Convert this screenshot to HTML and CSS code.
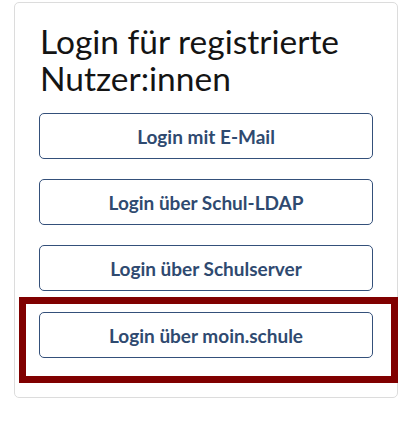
FILE: index.html
```html
<!DOCTYPE html>
<html lang="de">
<head>
<meta charset="utf-8">
<title>Login</title>
<link rel="stylesheet" href="styles.css">
</head>
<body>
<div class="card">
  <h2 class="title">Login für registrierte Nutzer:innen</h2>
  <div class="buttons">
    <a class="btn" href="#">Login mit E-Mail</a>
    <a class="btn" href="#">Login über Schul-LDAP</a>
    <a class="btn" href="#">Login über Schulserver</a>
    <div class="highlight">
      <a class="btn" href="#">Login über moin.schule</a>
    </div>
  </div>
</div>
</body>
</html>
```
FILE: styles.css
```css
html, body {
  margin: 0;
  padding: 0;
  background: #fff;
}
body {
  font-family: Lato, "Open Sans", sans-serif;
}
.card {
  margin: 2px 0 0 14px;
  width: 384px;
  height: 396px;
  box-sizing: border-box;
  border: 1px solid #dcdcdc;
  border-radius: 5px;
  padding: 0 24px 13px 24px;
}
.title {
  margin: 20px 0 0 1px;
  font-size: 33.5px;
  line-height: 37px;
  font-weight: 400;
  color: #141414;
}
.buttons {
  display: flex;
  flex-direction: column;
  margin-top: 16px;
}
.btn {
  display: flex;
  align-items: center;
  justify-content: center;
  height: 46px;
  box-sizing: border-box;
  border: 1px solid #34507a;
  border-radius: 5px;
  color: #2f4a70;
  font-weight: 700;
  font-size: 19px;
  text-decoration: none;
  margin-bottom: 20px;
}
.buttons > .btn:nth-child(3) {
  margin-bottom: 6px;
}
.highlight {
  border: 7px solid #800000;
  margin: 0 -25px 0 -20px;
  padding: 8px 18px 18px 13px;
}
.highlight .btn {
  margin-bottom: 0;
}
```
